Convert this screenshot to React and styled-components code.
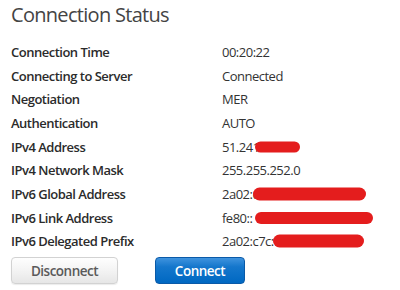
import styled, { createGlobalStyle } from 'styled-components';

const Global = createGlobalStyle`
  body {
    margin: 0;
    background: #fff;
    font-family: "Open Sans", "Liberation Sans", sans-serif;
    letter-spacing: -0.5px;
  }
`;

const Panel = styled.div`
  width: 400px;
  height: 290px;
  padding: 2px 11px 0 11px;
  box-sizing: border-box;
  color: #333;
`;

const Title = styled.h1`
  margin: 0 0 12px 0;
  font-size: 20px;
  font-weight: 400;
  line-height: 26px;
  letter-spacing: -0.7px;
  color: #444;
`;

const Table = styled.div`
  display: grid;
  grid-template-columns: 211px 1fr;
  grid-auto-rows: 23.7px;
  align-items: center;
  font-size: 13px;
`;

const Label = styled.div`
  font-weight: 600;
  color: #2b2b2b;
`;

const Value = styled.div`
  position: relative;
  color: #333;
`;

const Scribble = styled.svg`
  position: absolute;
  top: 50%;
  transform: translateY(-50%);
  overflow: visible;
`;

const Actions = styled.div`
  display: flex;
  gap: 37px;
  margin-top: 4px;
`;

const Button = styled.button`
  height: 27px;
  width: ${p => p.$w}px;
  border-radius: 4px;
  font-family: inherit;
  letter-spacing: -0.5px;
  font-size: 13.5px;
  font-weight: 600;
  cursor: pointer;
  border: 1px solid ${p => (p.$primary ? '#0a5aa8' : '#d2d2d2')};
  color: ${p => (p.$primary ? '#fff' : '#5a5a5a')};
  background: ${p =>
    p.$primary
      ? 'linear-gradient(#3f93de 0%, #1577cc 35%, #0068c2 100%)'
      : 'linear-gradient(#fefefe 0%, #f1f1f1 60%, #e6e6e6 100%)'};
  box-shadow: ${p => (p.$primary ? 'none' : '0 1px 1px rgba(0,0,0,0.08)')};
`;

const Redact = ({ left, width, height }) => (
  <Scribble style={{ left, width, height }} viewBox={`0 0 ${width} ${height}`}>
    <rect x="0" y="0" width={width} height={height} rx={height / 2} fill="#e41d1d" />
  </Scribble>
);

const rows = [
  { label: 'Connection Time', value: '00:20:22' },
  { label: 'Connecting to Server', value: 'Connected' },
  { label: 'Negotiation', value: 'MER' },
  { label: 'Authentication', value: 'AUTO' },
  { label: 'IPv4 Address', value: '51.241.', redact: { left: 33, width: 45, height: 11 } },
  { label: 'IPv4 Network Mask', value: '255.255.252.0' },
  { label: 'IPv6 Global Address', value: '2a02:c', redact: { left: 31, width: 113, height: 13 } },
  { label: 'IPv6 Link Address', value: 'fe80::', redact: { left: 33, width: 118, height: 12 } },
  { label: 'IPv6 Delegated Prefix', value: '2a02:c7c:', redact: { left: 51, width: 91, height: 13 } },
];

export default function App() {
  return (
    <Panel>
      <Global />
      <Title>Connection Status</Title>
      <Table>
        {rows.map(r => (
          <>
            <Label key={r.label + 'l'}>{r.label}</Label>
            <Value key={r.label + 'v'}>
              {r.value}
              {r.redact && <Redact {...r.redact} />}
            </Value>
          </>
        ))}
      </Table>
      <Actions>
        <Button $w={107}>Disconnect</Button>
        <Button $w={90} $primary>Connect</Button>
      </Actions>
    </Panel>
  );
}
